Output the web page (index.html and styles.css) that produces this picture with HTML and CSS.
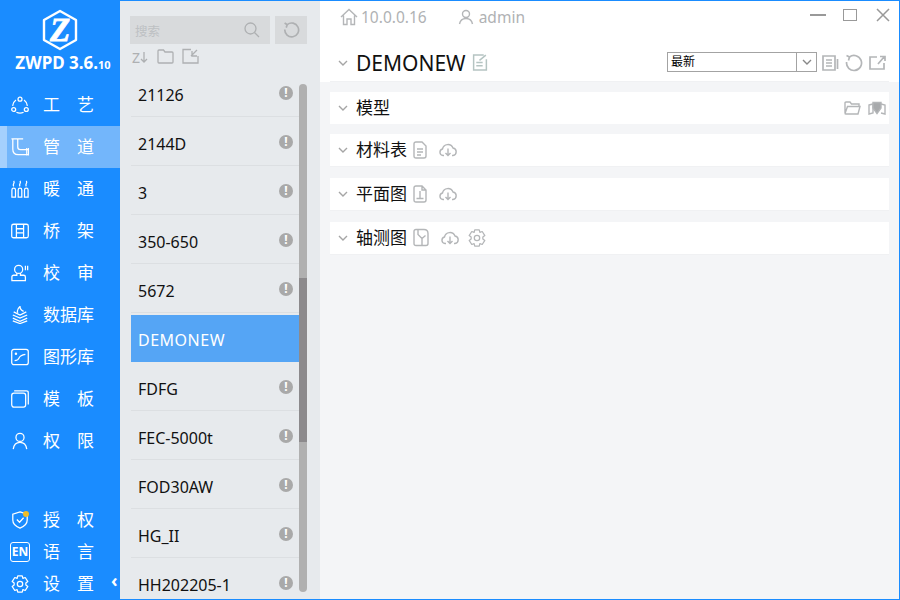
FILE: index.html
```html
<!DOCTYPE html>
<html>
  <head>
    <title>ZWPD</title>
    <link rel="stylesheet" href="styles.css">
  </head>
  <body>
    <div class="app">
      <nav class="side">
        <div class="logo">
          <svg width="38" height="42" viewBox="0 0 38 42">
            <path d="M19 2 L35 11 V31 L19 40 L3 31 V11 Z" fill="none" stroke="#fff" stroke-width="2.4" stroke-linejoin="round"/>
            <text x="19" y="32" text-anchor="middle" class="logo-z">Z</text>
          </svg>
          <div class="brand">ZWPD 3.6.<small>10</small></div>
        </div>
        <ul class="menu">
          <li><svg class="ico" viewBox="0 0 20 20"><circle cx="10" cy="3.5" r="2.200"/><circle cx="3" cy="15" r="2.200"/><circle cx="17" cy="15" r="2.200"/><path d="M5.500 4.500 A9 9 0 0 0 1.800 11M14.500 4.500 A9 9 0 0 1 18.200 11M6 18 A9 9 0 0 0 14 18"/></svg><span class="wide">工艺</span></li>
          <li class="on"><svg class="ico" viewBox="0 0 20 20"><path d="M.5 1 H13.500 M2 1 V12.500 Q2 18.500 8 18.500 H19 M7.500 1 V10 Q7.500 13 10.500 13 H19 M17.500 11 V19.500 M19.500 11 V19.500"/></svg><span class="wide">管道</span></li>
          <li><svg class="ico" viewBox="0 0 20 20"><path d="M1 19 V11 Q1 9 3 9 Q5 9 5 11 V19 Z M8 19 V11 Q8 9 10 9 Q12 9 12 11 V19 Z M15 19 V11 Q15 9 17 9 Q19 9 19 11 V19 Z M3 7 Q2 5.500 3 4 T3 1M10 7 Q9 5.500 10 4 T10 1M17 7 Q16 5.500 17 4 T17 1"/></svg><span class="wide">暖通</span></li>
          <li><svg class="ico" viewBox="0 0 20 20"><rect x=".8" y="2.500" width="18.400" height="15" rx="2"/><path d="M6 2.500 V17.500 M14 2.500 V17.500 M6 7.500 H14 M6 12 H14"/></svg><span class="wide">桥架</span></li>
          <li><svg class="ico" viewBox="0 0 20 20"><circle cx="8.500" cy="6" r="4.500"/><path d="M6.500 10 V12.500 H3 Q1 12.500 1 14.500 V18.500 H16 V14.500 Q16 12.500 14 12.500 H10.500 V10M16 2 V7M18.500 2 V7"/></svg><span class="wide">校审</span></li>
          <li><svg class="ico" viewBox="0 0 20 20"><path d="M2 10 L10 13.500 L18 10M2 13.500 L10 17 L18 13.500M2 16.500 L10 19.500 L18 16.500M3 6.500 L10 10 L17 6.500M7.500 7.500 Q6 4 10 .5 Q10 4 14 6"/></svg><span>数据库</span></li>
          <li><svg class="ico" viewBox="0 0 20 20"><rect x=".8" y="1.500" width="18.400" height="17" rx="2.500"/><path d="M4 14 Q8 14 9 11 T16 7"/><circle cx="5.500" cy="6.500" r=".7"/></svg><span>图形库</span></li>
          <li><svg class="ico" viewBox="0 0 20 20"><rect x=".8" y="3.500" width="15.500" height="15.500" rx="2.500"/><path d="M3.500 1 H17 Q19.200 1 19.200 3 V16"/></svg><span class="wide">模板</span></li>
          <li><svg class="ico" viewBox="0 0 20 20"><circle cx="10" cy="6" r="4.500"/><path d="M2.500 19 Q3.500 11.500 10 11.500 T17.500 19"/></svg><span class="wide">权限</span></li>
        </ul>
        <ul class="menu menu-low">
          <li class="dot"><svg class="ico" viewBox="0 0 20 20"><path d="M10 1 L18 3.500 V10 Q18 16 10 19 Q2 16 2 10 V3.500 Z M6.500 9.500 L9.500 12.500 L14 7.500"/></svg><span class="wide">授权</span></li>
          <li><span class="en">EN</span><span class="wide">语言</span></li>
          <li><svg class="ico" viewBox="0 0 20 20"><path d="M7.500 1 H12.500 L13.200 3.800 L15.800 2.800 L18.700 7.300 L16.500 9 V11 L18.700 12.700 L15.800 17.200 L13.200 16.200 L12.500 19 H7.500 L6.800 16.200 L4.200 17.200 L1.300 12.700 L3.500 11 V9 L1.300 7.300 L4.200 2.800 L6.800 3.800 Z" stroke-linejoin="round"/><circle cx="10" cy="10" r="3"/></svg><span class="wide">设置</span><b class="fold">‹</b></li>
        </ul>
      </nav>

      <section class="lists">
        <div class="search">
          <div class="search-box">
            <span>搜索</span>
            <svg width="18" height="18" viewBox="0 0 18 18"><circle cx="7.500" cy="7.500" r="5.500"/><path d="M11.500 11.500 L16 16"/></svg>
          </div>
          <div class="reload">
            <svg width="17" height="17" viewBox="0 0 16 16"><path d="M4 2.500 A6.500 6.500 0 1 1 1.700 7M1.500 1 L4 2.500 L3 5.300"/></svg>
          </div>
        </div>
        <div class="tools">
          <span class="sort">Z<svg width="8" height="11" viewBox="0 0 8 11"><path d="M4 0 V10 M1 7 L4 10 L7 7"/></svg></span>
          <svg width="17" height="15" viewBox="0 0 17 15"><path d="M1 13 V2 Q1 1 2 1 H6.500 L8 3 H15 Q16 3 16 4 V13 Q16 14 15 14 H2 Q1 14 1 13 Z"/></svg>
          <svg width="17" height="16" viewBox="0 0 17 16"><path d="M9 1.500 H1 V15 H16 V8M9 8 L15 2M10 3 V8 H15"/></svg>
        </div>
        <ul class="rows">
          <li>21126<i>!</i></li>
          <li>2144D<i>!</i></li>
          <li>3<i>!</i></li>
          <li>350-650<i>!</i></li>
          <li>5672<i>!</i></li>
          <li class="sel">DEMONEW</li>
          <li>FDFG<i>!</i></li>
          <li>FEC-5000t<i>!</i></li>
          <li>FOD30AW<i>!</i></li>
          <li>HG_II<i>!</i></li>
          <li>HH202205-1<i>!</i></li>
        </ul>
        <div class="bar"><div class="thumb"></div></div>
      </section>

      <main class="main">
        <header class="top">
          <svg class="g" width="18" height="18" viewBox="0 0 18 18"><path d="M1 9 L9 1.500 L17 9M3.500 7.500 V16.500 H7 V11 H11 V16.500 H14.500 V7.500"/></svg>
          <span class="addr">10.0.0.16</span>
          <svg class="g" width="16" height="16" viewBox="0 0 16 16"><circle cx="8" cy="5" r="3.500"/><path d="M1.500 15 Q2.500 9.500 8 9.500 T14.500 15"/></svg>
          <span class="user">admin</span>
          <div class="win">
            <span class="min"></span>
            <span class="max"></span>
            <svg width="14" height="14" viewBox="0 0 14 14"><path d="M1 1 L13 13 M13 1 L1 13"/></svg>
          </div>
        </header>
        <div class="title">
          <svg class="chev" width="10" height="6" viewBox="0 0 10 6"><path d="M1 1 L5 5 L9 1"/></svg>
          <h1>DEMONEW</h1>
          <svg class="g note" width="16" height="17" viewBox="0 0 15 16"><path d="M11 1 H1.500 V15 H13.500 V5M4 8 H10M4 11 H10M7 6 L13 1"/></svg>
          <div class="title-r">
            <div class="pick"><span>最新</span><em><svg class="chev" width="10" height="6" viewBox="0 0 10 6"><path d="M1 1 L5 5 L9 1"/></svg></em></div>
            <svg class="g g2" width="17" height="16" viewBox="0 0 17 16"><path d="M1 1 H13 V15 H1 Z M4 5 H10 M4 8 H10 M4 11 H10 M15.500 4 V14"/></svg>
            <svg class="g g2" width="18" height="18" viewBox="0 0 18 18"><path d="M4.500 3 A7.500 7.500 0 1 1 1.600 8M1.500 1.500 L4.500 3 L3.500 6.500"/></svg>
            <svg class="g g2" width="17" height="15" viewBox="0 0 17 15"><path d="M8 2 H1 V14 H15 V8M9 9 L15 2M11 1.500 H16 V6"/></svg>
          </div>
        </div>
        <div class="cards">
          <div class="card">
            <svg class="chev" width="10" height="6" viewBox="0 0 10 6"><path d="M1 1 L5 5 L9 1"/></svg>
            <span class="name">模型</span>
            <div class="card-r">
              <svg class="g" width="17" height="14" viewBox="0 0 17 14"><path d="M1 12 V2 Q1 1 2 1 H6 L7.500 3 H15 V5M1 12.500 Q1 13 2 13 H14 L16 5.500 H3.500 L1 12.500"/></svg>
              <svg class="g" width="18" height="14" viewBox="0 0 18 14"><path d="M1 4 L5 3 V12 L1 13 Z M13 3 L17 4 V13 L13 12"/><path class="fill" d="M5 1.500 H13 V7 L9 12.500 L5 7 Z"/></svg>
            </div>
          </div>
          <div class="card">
            <svg class="chev" width="10" height="6" viewBox="0 0 10 6"><path d="M1 1 L5 5 L9 1"/></svg>
            <span class="name">材料表</span>
            <svg class="g" width="14" height="18" viewBox="0 0 14 18"><path d="M1 3 Q1 1 3 1 H9 L13 5 V15 Q13 17 11 17 H3 Q1 17 1 15 Z M4 8 H10 M4 11 H10 M4 14 H8"/></svg>
            <svg class="g cloud" width="18" height="14" viewBox="0 0 18 14"><path d="M5 12.500 H4 A3.300 3.300 0 0 1 3.500 6 A5.500 5.500 0 0 1 14 5 A3.800 3.800 0 0 1 14 12.500 H13M9 5.500 V12.500M6.500 10 L9 12.500 L11.500 10"/></svg>
          </div>
          <div class="card">
            <svg class="chev" width="10" height="6" viewBox="0 0 10 6"><path d="M1 1 L5 5 L9 1"/></svg>
            <span class="name">平面图</span>
            <svg class="g" width="14" height="18" viewBox="0 0 14 18"><path d="M1 3 Q1 1 3 1 H9 L13 5 V15 Q13 17 11 17 H3 Q1 17 1 15 Z M7 6 V13 M3.500 13.500 H10.500 M9 1 V5 H13"/></svg>
            <svg class="g cloud" width="18" height="14" viewBox="0 0 18 14"><path d="M5 12.500 H4 A3.300 3.300 0 0 1 3.500 6 A5.500 5.500 0 0 1 14 5 A3.800 3.800 0 0 1 14 12.500 H13M9 5.500 V12.500M6.500 10 L9 12.500 L11.500 10"/></svg>
          </div>
          <div class="card">
            <svg class="chev" width="10" height="6" viewBox="0 0 10 6"><path d="M1 1 L5 5 L9 1"/></svg>
            <span class="name">轴测图</span>
            <svg class="g" width="16" height="19" viewBox="0 0 16 18"><path d="M1 3 Q1 1 3 1 H11 Q15 1 15 5 V15 Q15 17 13 17 H3 Q1 17 1 15 Z M5 1 V6 L9 10 V17 M9 10 L12.500 7"/></svg>
            <svg class="g cloud" width="18" height="14" viewBox="0 0 18 14"><path d="M5 12.500 H4 A3.300 3.300 0 0 1 3.500 6 A5.500 5.500 0 0 1 14 5 A3.800 3.800 0 0 1 14 12.500 H13M9 5.500 V12.500M6.500 10 L9 12.500 L11.500 10"/></svg>
            <svg class="g gear" width="18" height="18" viewBox="0 0 20 20"><path d="M7.500 1 H12.500 L13.200 3.800 L15.800 2.800 L18.700 7.300 L16.500 9 V11 L18.700 12.700 L15.800 17.200 L13.200 16.200 L12.500 19 H7.500 L6.800 16.200 L4.200 17.200 L1.300 12.700 L3.500 11 V9 L1.300 7.300 L4.200 2.800 L6.800 3.800 Z" stroke-linejoin="round"/><circle cx="10" cy="10" r="3"/></svg>
          </div>
        </div>
      </main>
    </div>
  </body>
</html>
```

FILE: styles.css
```css
html, body { margin: 0; padding: 0; height: 100%; overflow: hidden; }
body { font-family: "Noto Sans", "Noto Sans CJK SC", sans-serif; background: #fff; }
ul { list-style: none; margin: 0; padding: 0; }
svg { display: block; flex: none; }

.app { display: flex; width: 900px; height: 600px; box-sizing: border-box; border-top: 1px solid #1a8cff; border-right: 1px solid #1a8cff; border-bottom: 1px solid #1a8cff; }

/* left blue menu */
.side { width: 120px; flex: none; margin-top: -1px; margin-bottom: -1px; background: #1a8cff; color: #fff; display: flex; flex-direction: column; position: relative; }
.logo { height: 84px; padding-top: 9px; box-sizing: border-box; display: flex; flex-direction: column; align-items: center; flex: none; }
.logo-z { font-family: "Liberation Serif", serif; font-weight: bold; font-style: italic; font-size: 33px; fill: #fff; stroke: #fff; stroke-width: .8; }
.brand { font-size: 17px; font-weight: 700; line-height: 22px; white-space: nowrap; margin: 1px 0 0 6px; }
.brand small { font-size: 11px; }
.menu li { height: 42px; display: flex; align-items: center; padding-left: 11px; font-size: 17px; position: relative; box-sizing: border-box; }
.menu span { margin-bottom: 4px; }
.menu .on { background: #73b6fb; border-left: 7px solid #a5d0fd; padding-left: 4px; }
.ico { width: 18px; height: 18px; margin-right: 14px; fill: none; stroke: #fff; stroke-width: 1.400; }
.wide { letter-spacing: 17px; white-space: nowrap; }
.menu-low { margin-top: auto; }
.menu-low li { height: 32px; }
.dot::after { content: ""; position: absolute; left: 23px; top: 7px; width: 6px; height: 6px; border-radius: 50%; background: #f0bd27; }
.menu .en { width: 20px; height: 20px; box-sizing: border-box; border: 1.500px solid #fff; border-radius: 3px; font-size: 12px; font-weight: 700; line-height: 17px; text-align: center; margin: 0 13px 0 -1px; }
.fold { position: absolute; left: 111px; top: 0; font-size: 18px; font-weight: 700; line-height: 24px; }

/* middle list */
.lists { width: 200px; flex: none; background: #e7eaed; position: relative; overflow: hidden; display: flex; flex-direction: column; }
.search { display: flex; gap: 5px; padding: 15px 0 0 10px; flex: none; }
.search-box { width: 140px; height: 28px; background: #d8dadc; color: #bdc0c3; font-size: 12.500px; display: flex; align-items: center; justify-content: space-between; padding: 0 9px 0 5px; box-sizing: border-box; }
.search-box svg, .reload svg, .tools svg { fill: none; stroke: #aeb0b2; stroke-width: 1.300; }
.reload svg { stroke-width: 1.600; }
.reload { width: 32px; height: 28px; background: #d8dadc; display: flex; align-items: center; justify-content: center; }
.tools { display: flex; align-items: center; gap: 8px; height: 20px; padding: 2px 0 0 12px; flex: none; }
.sort { color: #aeb0b2; font-size: 14px; line-height: 14px; width: 17px; display: flex; align-items: center; gap: 0; margin-top: 3px; }
.rows { margin-left: 11px; width: 168px; margin-top: 2px; }
.rows li { height: 49px; box-sizing: border-box; border-bottom: 1px solid #dcdfe2; font-size: 16px; color: #111; padding: 14px 0 0 7px; line-height: 26px; position: relative; }
.rows .sel { background: #55a5f5; color: #fff; border-top: 2px solid #e7eaed; border-bottom: 0; padding-top: 12px; letter-spacing: .5px; }
.rows i { position: absolute; left: 148px; top: 18px; width: 14px; height: 14px; border-radius: 50%; background: #a9a9a9; color: #fff; font-style: normal; font-weight: 700; font-size: 12px; line-height: 14px; text-align: center; }
.bar { position: absolute; left: 179px; top: 83px; width: 8px; height: 508px; background: #b0b0b0; border-radius: 4px; }
.thumb { margin-top: 194px; height: 164px; background: #8c8a8c; }

/* right part */
.main { flex: 1; min-width: 0; background: #f4f5f7; display: flex; flex-direction: column; }
.g, .win svg { fill: none; stroke: #b4b6b8; stroke-width: 1.400; }
.g .fill { fill: #a8aaac; }
.top { height: 39px; background: #fff; display: flex; align-items: center; padding: 0 9px 8px 20px; box-sizing: border-box; color: #b0b2b4; font-size: 15.500px; flex: none; }
.addr { margin-left: 3px; }
.user { margin-left: 5px; }
.top .g + .addr + .g { margin-left: 31px; }
.win { margin-left: auto; display: flex; align-items: center; gap: 17px; margin-top: -4px; }
.win svg { stroke: #999; stroke-width: 1.500; }
.min { width: 16px; height: 2px; background: #999; }
.max { width: 12px; height: 10px; border: 1px solid #999; margin-right: 2px; }
.title { height: 42px; flex: none; padding-top: 4px; background: #fff; border-bottom: 1px solid #f0f1f3; margin: 0 10px; display: flex; align-items: center; box-sizing: border-box; box-shadow: 10px 0 0 #fff, -10px 0 0 #fff; }
.chev { fill: none; stroke: #a5a5a5; stroke-width: 1.400; margin: 0 8px 0 8px; }
.title h1 { margin: 0; font-size: 21px; font-weight: 400; color: #111; line-height: 28px; }
.note { margin-left: 6px; stroke: #b5c4c2; }
.title-r { margin-left: auto; display: flex; align-items: center; gap: 6px; padding-right: 3px; }
.pick { width: 150px; height: 20px; box-sizing: border-box; border: 1px solid #a3a3a3; background: #fff; display: flex; font-size: 12px; line-height: 18px; color: #000; margin: -2px -1px 0 0; padding-left: 3px; }
.pick span { flex: 1; }
.pick em { width: 19px; border-left: 1px solid #a3a3a3; display: flex; align-items: center; justify-content: center; }
.pick .chev { margin: 0; stroke: #888; }
.g2 { stroke-width: 1.700; }
.cards { padding: 10px 10px 0 10px; display: flex; flex-direction: column; gap: 11px; }
.card { height: 33px; box-sizing: border-box; background: #fff; border-bottom: 1px solid #f0f1f3; display: flex; align-items: center; font-size: 17px; color: #111; padding-bottom: 1px; }
.card:first-child { height: 32px; border-bottom: 0; margin-bottom: -1px; }
.name { margin-right: 6px; line-height: 24px; }
.cloud { margin-left: 12px; }
.gear { margin-left: 9px; }
.card-r { margin-left: auto; display: flex; gap: 7px; align-items: center; padding-right: 3px; }
```
